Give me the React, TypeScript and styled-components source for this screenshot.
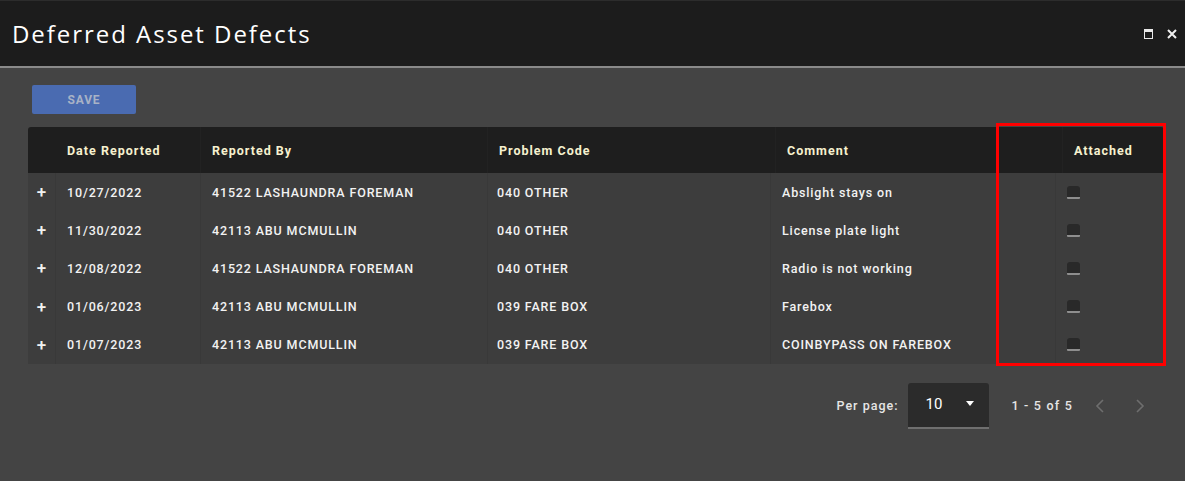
import React from 'react'
import styled, { createGlobalStyle } from 'styled-components'

const GlobalStyle = createGlobalStyle`
    html, body {
        margin: 0;
        padding: 0;
        height: 100%;
        background: #444444;
        font-family: Roboto, 'Liberation Sans', sans-serif;
    }
    #root {
        height: 100%;
    }
`

const Dialog = styled.div`
    display: flex;
    flex-direction: column;
    height: 481px;
    background: #444444;
`

const TitleBar = styled.div`
    height: 65px;
    display: flex;
    align-items: center;
    justify-content: space-between;
    padding: 0 8px 0 12px;
    background: #1c1c1c;
    border-top: 1px solid #2c2c2c;
    border-bottom: 2px solid #8a8a8a;
`

const Title = styled.h1`
    margin: 0;
    font-family: 'Open Sans', Roboto, sans-serif;
    font-size: 24px;
    font-weight: 500;
    letter-spacing: 1.95px;
    color: #ffffff;
`

const WindowButtons = styled.div`
    display: flex;
    align-items: center;
    gap: 14px;
`

const MaxIcon = styled.div`
    width: 7px;
    height: 6px;
    border: 1px solid #e8e8e8;
    border-top-width: 3px;
`

const CloseGlyph = styled.svg`
    width: 10px;
    height: 10px;
`

const Content = styled.div`
    flex: 1;
    padding: 17px 21px 0 28px;
    display: flex;
    flex-direction: column;
`

const SaveButton = styled.button`
    margin-left: 4px;
    width: 104px;
    height: 29px;
    border: none;
    border-radius: 2px;
    background: #4a6bb1;
    color: #a8b2c6;
    font-family: Roboto, 'Liberation Sans', sans-serif;
    font-weight: 700;
    font-size: 12px;
    letter-spacing: 0.8px;
`

const TableWrap = styled.div`
    position: relative;
    margin-top: 13px;
    width: 1136px;
`

const HeaderRow = styled.div`
    display: grid;
    grid-template-columns: 27px 145px 287px 288px 287px 102px;
    height: 46px;
    background: #1e1e1e;
    border-radius: 3px 3px 0 0;
`

const HeaderCell = styled.div`
    display: flex;
    align-items: center;
    padding-left: 11px;
    font-size: 12.5px;
    font-weight: 700;
    letter-spacing: 1px;
    color: #f6f1cf;
    border-left: 1px solid ${p => (p.$first ? 'transparent' : '#222222')};
`

const BodyRow = styled.div`
    display: grid;
    grid-template-columns: 27px 145px 287px 283px 285px 109px;
    height: 38.2px;
    background: #3d3d3d;
    &:last-child {
        border-radius: 0 0 3px 3px;
    }
`

const Cell = styled.div`
    display: flex;
    align-items: center;
    padding-left: ${p => p.$pad ?? 11}px;
    font-size: 12.5px;
    font-weight: 500;
    letter-spacing: 0.85px;
    color: #f2f2f2;
    white-space: nowrap;
    border-left: 1px solid ${p => (p.$first ? 'transparent' : '#393939')};
`

const Expand = styled.div`
    display: flex;
    align-items: center;
    justify-content: center;
    font-size: 17px;
    font-weight: 500;
    color: #f2f2f2;
`

const Check = styled.div`
    width: 13px;
    height: 11px;
    border-radius: 3px 3px 1px 1px;
    background: #292929;
    border-bottom: 2px solid #8e8e8e;
`

const Highlight = styled.div`
    position: absolute;
    left: 968px;
    top: -4px;
    width: 164px;
    height: 237px;
    border: 3px solid #ff0000;
    pointer-events: none;
`

const Pager = styled.div`
    display: flex;
    align-items: center;
    justify-content: flex-end;
    box-sizing: border-box;
    margin-top: 19px;
    padding-right: 19px;
    width: 1136px;
`

const PagerText = styled.span`
    font-size: 12.5px;
    font-weight: 500;
    letter-spacing: 1px;
    color: #e6e6e6;
`

const Select = styled.div`
    margin-left: 9px;
    width: 81px;
    height: 46px;
    display: flex;
    align-items: center;
    justify-content: space-between;
    padding: 0 15px 2px 18px;
    box-sizing: border-box;
    background: #2b2b2b;
    border-radius: 3px 3px 0 0;
    border-bottom: 2px solid #6f6f6f;
    font-size: 15px;
    color: #ffffff;
`

const Caret = styled.span`
    width: 0;
    height: 0;
    border-left: 4px solid transparent;
    border-right: 4px solid transparent;
    border-top: 5px solid #ffffff;
`

const Range = styled(PagerText)`
    margin-left: 23px;
    letter-spacing: 1.2px;
`

const NavButton = styled.svg`
    width: 10px;
    height: 16px;
    margin-left: ${p => p.$gap}px;
`

const rows = [
    ['10/27/2022', '41522 LASHAUNDRA FOREMAN', '040 OTHER', 'Abslight stays on'],
    ['11/30/2022', '42113 ABU MCMULLIN', '040 OTHER', 'License plate light'],
    ['12/08/2022', '41522 LASHAUNDRA FOREMAN', '040 OTHER', 'Radio is not working'],
    ['01/06/2023', '42113 ABU MCMULLIN', '039 FARE BOX', 'Farebox'],
    ['01/07/2023', '42113 ABU MCMULLIN', '039 FARE BOX', 'COINBYPASS ON FAREBOX'],
]

const App = () => {
    return (
        <Dialog>
            <GlobalStyle />
            <TitleBar>
                <Title>Deferred Asset Defects</Title>
                <WindowButtons>
                    <MaxIcon />
                    <CloseGlyph viewBox="0 0 10 10">
                        <path d="M1 1L9 9M9 1L1 9" stroke="#f0f0f0" strokeWidth="2" />
                    </CloseGlyph>
                </WindowButtons>
            </TitleBar>
            <Content>
                <div>
                    <SaveButton>SAVE</SaveButton>
                </div>
                <TableWrap>
                    <HeaderRow>
                        <HeaderCell $first />
                        <HeaderCell $first>Date Reported</HeaderCell>
                        <HeaderCell>Reported By</HeaderCell>
                        <HeaderCell>Problem Code</HeaderCell>
                        <HeaderCell>Comment</HeaderCell>
                        <HeaderCell>Attached</HeaderCell>
                    </HeaderRow>
                    {rows.map(r => (
                        <BodyRow key={r[0]}>
                            <Expand>+</Expand>
                            <Cell>{r[0]}</Cell>
                            <Cell>{r[1]}</Cell>
                            <Cell $pad={9}>{r[2]}</Cell>
                            <Cell>{r[3]}</Cell>
                            <Cell>
                                <Check />
                            </Cell>
                        </BodyRow>
                    ))}
                    <Highlight />
                </TableWrap>
                <Pager>
                    <PagerText>Per page:</PagerText>
                    <Select>
                        10
                        <Caret />
                    </Select>
                    <Range>1 - 5 of 5</Range>
                    <NavButton $gap={22} viewBox="0 0 10 16">
                        <path d="M8 2L2 8L8 14" stroke="#6e6e6e" strokeWidth="1.6" fill="none" />
                    </NavButton>
                    <NavButton $gap={30} viewBox="0 0 10 16">
                        <path d="M2 2L8 8L2 14" stroke="#6e6e6e" strokeWidth="1.6" fill="none" />
                    </NavButton>
                </Pager>
            </Content>
        </Dialog>
    )
}

export default App
